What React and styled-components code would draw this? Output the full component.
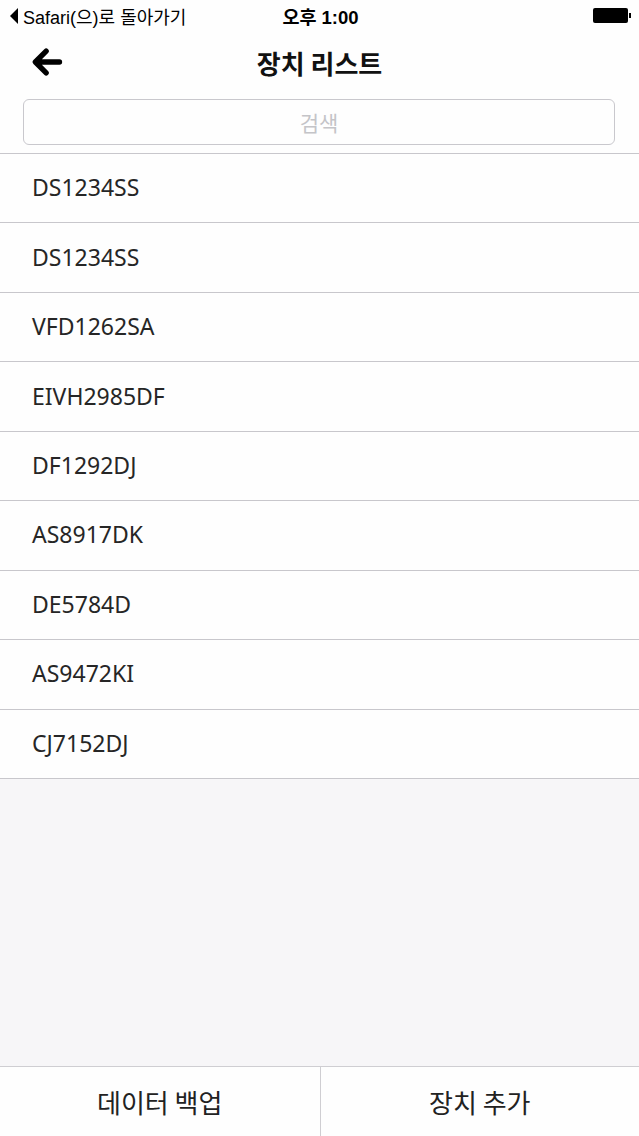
import React from "react";
import styled, { createGlobalStyle } from "styled-components";

const devices = [
  "DS1234SS",
  "DS1234SS",
  "VFD1262SA",
  "EIVH2985DF",
  "DF1292DJ",
  "AS8917DK",
  "DE5784D",
  "AS9472KI",
  "CJ7152DJ",
];

const App = () => {
  return (
    <Page>
      <GlobalStyle />
      <StatusBar>
        <BackToSafari>
          <Triangle />
          Safari(으)로 돌아가기
        </BackToSafari>
        <Clock>오후 1:00</Clock>
        <Battery>
          <BatteryBody />
          <BatteryTip />
        </Battery>
      </StatusBar>

      <NavBar>
        <BackButton aria-label="back">
          <svg width="40" height="40" viewBox="0 0 24 24" fill="none">
            <path
              d="M19.5 12H5.5M11.5 5.5L5 12l6.5 6.5"
              stroke="#000"
              strokeWidth="3.2"
              strokeLinecap="round"
              strokeLinejoin="round"
            />
          </svg>
        </BackButton>
        <Title>장치 리스트</Title>
      </NavBar>

      <SearchWrap>
        <SearchInput placeholder="검색" />
      </SearchWrap>

      <List>
        {devices.map((name, i) => (
          <Row key={i}>{name}</Row>
        ))}
      </List>

      <Spacer />

      <BottomBar>
        <BottomButton>데이터 백업</BottomButton>
        <BottomButton>장치 추가</BottomButton>
      </BottomBar>
    </Page>
  );
};

const GlobalStyle = createGlobalStyle`
  html, body {
    margin: 0;
    padding: 0;
    background: #f7f6f8;
  }
  #root {
    min-height: 100vh;
  }
  * {
    box-sizing: border-box;
  }
`;

const Page = styled.div`
  display: flex;
  flex-direction: column;
  min-height: 100vh;
  background: #f7f6f8;
  font-family: "Noto Sans", "Noto Sans CJK KR", sans-serif;
  color: #222;
`;

const StatusBar = styled.div`
  height: 31px;
  display: grid;
  grid-template-columns: 1fr auto 1fr;
  align-items: center;
  padding: 0 8px 0 10px;
  background: #fefefe;
  font-family: "Liberation Sans", "Noto Sans CJK KR", sans-serif;
  color: #000;
`;

const BackToSafari = styled.div`
  display: flex;
  align-items: center;
  gap: 5px;
  font-size: 18px;
`;

const Triangle = styled.span`
  width: 0;
  height: 0;
  border-top: 8px solid transparent;
  border-bottom: 8px solid transparent;
  border-right: 8px solid #000;
`;

const Clock = styled.div`
  font-size: 18.5px;
  font-weight: 700;
`;

const Battery = styled.div`
  justify-self: end;
  display: flex;
  align-items: center;
`;

const BatteryBody = styled.div`
  width: 35px;
  height: 15px;
  background: #000;
  border-radius: 2px;
`;

const BatteryTip = styled.div`
  width: 2px;
  height: 5px;
  background: #000;
  margin-left: 1px;
`;

const NavBar = styled.div`
  height: 66px;
  display: grid;
  grid-template-columns: 90px 1fr 90px;
  align-items: center;
  padding-bottom: 4px;
  background: #fefefe;
`;

const BackButton = styled.button`
  background: none;
  border: none;
  padding: 0 0 0 27px;
  display: flex;
  align-items: center;
  cursor: pointer;
`;

const Title = styled.h1`
  margin: 0;
  text-align: center;
  font-family: "Noto Sans CJK KR", sans-serif;
  font-size: 26px;
  font-weight: 700;
  color: #111;
`;

const SearchWrap = styled.div`
  padding: 2px 24px 8px 23px;
  background: #fefefe;
`;

const SearchInput = styled.input`
  width: 100%;
  height: 46px;
  border: 1px solid #c9c8cd;
  border-radius: 6px;
  background: #fefefe;
  text-align: center;
  font-family: "Noto Sans CJK KR", sans-serif;
  font-size: 21px;
  outline: none;
  &::placeholder {
    color: #c4c4c8;
  }
`;

const List = styled.div`
  display: flex;
  flex-direction: column;
  border-top: 1px solid #c8c7cc;
  background: #fefefe;
`;

const Row = styled.div`
  height: 69.45px;
  display: flex;
  align-items: center;
  padding-left: 32px;
  padding-bottom: 2px;
  border-bottom: 1px solid #c8c7cc;
  font-size: 23px;
  color: #262626;
`;

const Spacer = styled.div`
  flex: 1;
`;

const BottomBar = styled.div`
  display: grid;
  grid-template-columns: 1fr 1fr;
  height: 70px;
  border-top: 1px solid #cfced2;
  background: #fefefe;
`;

const BottomButton = styled.button`
  border: none;
  background: #fefefe;
  font-family: "Noto Sans CJK KR", sans-serif;
  font-size: 26px;
  color: #222;
  cursor: pointer;
  & + & {
    border-left: 1px solid #cfced2;
  }
`;

export default App;
